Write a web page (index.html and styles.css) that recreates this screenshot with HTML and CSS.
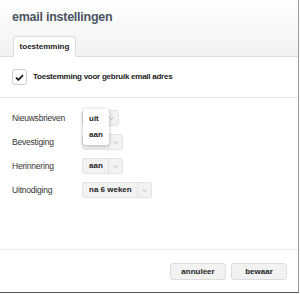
FILE: index.html
```html
<!DOCTYPE html>
<html lang="nl">
<head>
  <meta charset="UTF-8">
  <title>email instellingen</title>
  <link rel="stylesheet" href="styles.css">
</head>
<body>

<div class="modal">
  <div class="kop">
    <h3>email instellingen</h3>
    <div class="tabs">
      <span class="tab">toestemming</span>
    </div>
  </div>

  <div class="inhoud">
    <label class="toestemming">
      <span class="vinkje">
        <svg width="9" height="7" viewBox="0 0 9 7"><path d="M1 3.6 L3.4 5.8 L8 1.2" fill="none" stroke="#222" stroke-width="1.9"/></svg>
      </span>
      Toestemming voor gebruik email adres
    </label>

    <div class="rijen">
      <div class="rij open">
        <span class="label">Nieuwsbrieven</span>
        <span class="keuze"><span class="waarde">uit</span><span class="pijl"><svg width="5" height="3" viewBox="0 0 5 3"><path d="M0.5 0.5 L2.5 2.5 L4.5 0.5" fill="none" stroke="#aaa" stroke-width="0.8"/></svg></span></span>
        <ul class="menu">
          <li>uit</li>
          <li>aan</li>
        </ul>
      </div>
      <div class="rij">
        <span class="label">Bevestiging</span>
        <span class="keuze"><span class="waarde">aan</span><span class="pijl"><svg width="5" height="3" viewBox="0 0 5 3"><path d="M0.5 0.5 L2.5 2.5 L4.5 0.5" fill="none" stroke="#aaa" stroke-width="0.8"/></svg></span></span>
      </div>
      <div class="rij">
        <span class="label">Herinnering</span>
        <span class="keuze"><span class="waarde">aan</span><span class="pijl"><svg width="5" height="3" viewBox="0 0 5 3"><path d="M0.5 0.5 L2.5 2.5 L4.5 0.5" fill="none" stroke="#aaa" stroke-width="0.8"/></svg></span></span>
      </div>
      <div class="rij">
        <span class="label">Uitnodiging</span>
        <span class="keuze"><span class="waarde">na 6 weken</span><span class="pijl"><svg width="5" height="3" viewBox="0 0 5 3"><path d="M0.5 0.5 L2.5 2.5 L4.5 0.5" fill="none" stroke="#aaa" stroke-width="0.8"/></svg></span></span>
      </div>
    </div>
  </div>

  <div class="voet">
    <button>annuleer</button>
    <button>bewaar</button>
  </div>
</div>

</body>
</html>
```

FILE: styles.css
```css
* {
  box-sizing: border-box;
}

body {
  margin: 0;
  background: #fff;
  font-family: 'Liberation Sans', Arial, sans-serif;
  font-size: 8px;
  color: #222;
}

.modal {
  width: 299px;
  height: 293px;
  border-right: 1px solid #9a9a9a;
  border-bottom: 1px solid #555;
  display: flex;
  flex-direction: column;
  background: #fff;
}

.kop {
  background: linear-gradient(#fff, #f2f2f2);
  border-bottom: 1px solid #ddd;
  padding: 0 12px;
  height: 57px;
  display: flex;
  flex-direction: column;
  justify-content: space-between;
}

.kop h3 {
  margin: 11px 0 0;
  font-size: 12.5px;
  line-height: 13px;
  font-weight: bold;
  letter-spacing: -0.25px;
  color: #4a5462;
}

.tabs {
  display: flex;
  margin-bottom: -1px;
}

.tab {
  background: #fff;
  border: 1px solid #ddd;
  border-bottom-color: #fff;
  border-radius: 3px 3px 0 0;
  height: 21px;
  width: 63px;
  margin-left: 1px;
  font-weight: bold;
  line-height: 19px;
  text-align: center;
}

.inhoud {
  flex: 1;
  border-bottom: 1px solid #ececec;
}

.toestemming {
  display: flex;
  gap: 6px;
  padding: 12px 12px 0;
  height: 41px;
  align-items: flex-start;
  border-bottom: 1px solid #e6e6e6;
  font-weight: bold;
  letter-spacing: -0.25px;
  line-height: 16px;
}

.vinkje {
  width: 15px;
  height: 16px;
  border: 1px solid #ccc;
  border-radius: 3px;
  display: flex;
  align-items: center;
  justify-content: center;
}

.rijen {
  padding: 8px 12px 0;
}

.rij {
  display: flex;
  align-items: center;
  height: 24px;
  position: relative;
  color: #333;
  font-size: 8.5px;
  letter-spacing: -0.2px;
}

.rij.open {
  z-index: 2;
}

.label {
  width: 70px;
}

.keuze {
  display: flex;
  height: 16px;
  background: #f2f2f2;
  border: 1px solid #e2e2e2;
  border-radius: 3px;
  font-size: 8px;
  font-weight: bold;
  letter-spacing: 0;
  line-height: 14px;
  color: #222;
}

.waarde {
  padding: 0 5px 0 6px;
  border-right: 1px solid #e2e2e2;
}

.pijl {
  width: 13px;
  display: flex;
  align-items: center;
  justify-content: center;
}

.menu {
  position: absolute;
  left: 71px;
  top: 3px;
  width: 26px;
  margin: 0;
  padding: 2px 0;
  list-style: none;
  background: #fff;
  border-radius: 3px;
  box-shadow: 0 1px 4px rgba(0, 0, 0, 0.28);
  font-size: 8px;
  font-weight: bold;
  letter-spacing: 0;
  color: #222;
}

.menu li {
  padding-left: 6px;
  line-height: 16px;
}

.voet {
  height: 42px;
  display: flex;
  justify-content: flex-end;
  align-items: flex-start;
  gap: 5px;
  padding: 13px 11px 0;
}

.voet button {
  width: 56px;
  height: 17px;
  padding: 0;
  background: #f2f2f2;
  border: 1px solid #ddd;
  border-radius: 3px;
  font-family: 'Liberation Sans', Arial, sans-serif;
  font-size: 8px;
  font-weight: bold;
  color: #222;
}
```
